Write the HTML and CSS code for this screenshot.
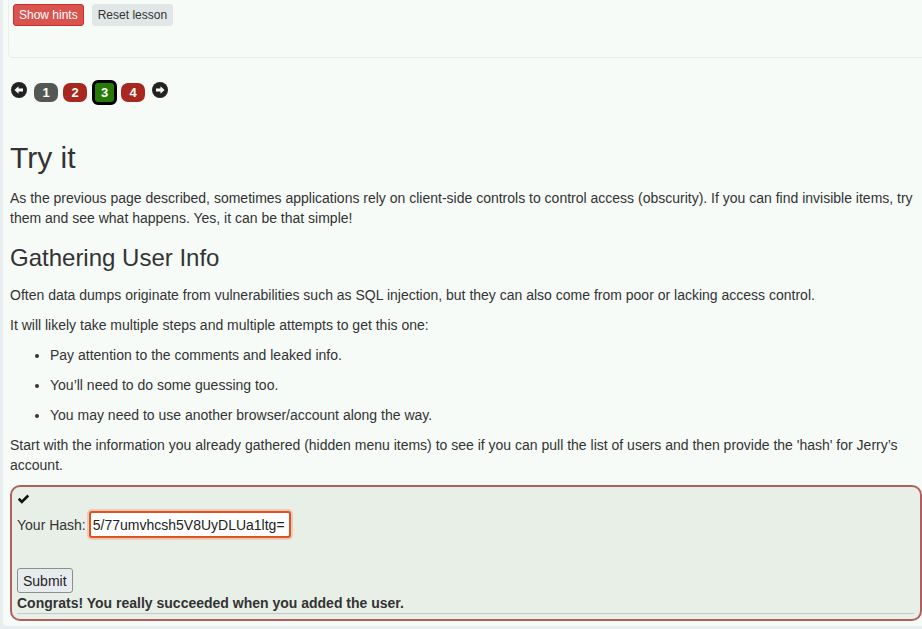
FILE: index.html
```html
<!DOCTYPE html>
<html>
<head>
<meta charset="utf-8">
<link rel="stylesheet" href="styles.css">
</head>
<body>
<div class="page">
  <div class="toolbar">
    <button class="btn btn-hints">Show hints</button>
    <button class="btn btn-reset">Reset lesson</button>
  </div>

  <div class="pager">
    <svg class="arrow" viewBox="0 0 16 16" width="16" height="16"><circle cx="8" cy="8" r="8" fill="#222"/><path d="M3.5 8 L7.5 4.2 L7.5 6.6 L12 6.6 L12 9.4 L7.5 9.4 L7.5 11.8 Z" fill="#fff"/></svg>
    <span class="pg pg-grey">1</span>
    <span class="pg pg-red">2</span>
    <span class="pg pg-green">3</span>
    <span class="pg pg-red">4</span>
    <svg class="arrow" viewBox="0 0 16 16" width="16" height="16"><circle cx="8" cy="8" r="8" fill="#222"/><path d="M12.5 8 L8.5 4.2 L8.5 6.6 L4 6.6 L4 9.4 L8.5 9.4 L8.5 11.8 Z" fill="#fff"/></svg>
  </div>

  <div class="content">
    <h1>Try it</h1>
    <p>As the previous page described, sometimes applications rely on client-side controls to control access (obscurity). If you can find invisible items, try them and see what happens. Yes, it can be that simple!</p>
    <h3>Gathering User Info</h3>
    <p>Often data dumps originate from vulnerabilities such as SQL injection, but they can also come from poor or lacking access control.</p>
    <p>It will likely take multiple steps and multiple attempts to get this one:</p>
    <ul>
      <li><p>Pay attention to the comments and leaked info.</p></li>
      <li><p>You’ll need to do some guessing too.</p></li>
      <li><p>You may need to use another browser/account along the way.</p></li>
    </ul>
    <p>Start with the information you already gathered (hidden menu items) to see if you can pull the list of users and then provide the 'hash' for Jerry’s account.</p>
  </div>

  <div class="attack">
    <div class="check"><svg viewBox="0 0 14 12" width="13" height="11"><path d="M0.8 6.2 L2.8 4.2 L5.2 6.6 L11.2 0.6 L13.2 2.6 L5.2 10.6 Z" fill="#111"/></svg></div>
    <div class="row">
      <label class="lbl">Your Hash:</label>
      <input class="hash" type="text" value="5/77umvhcsh5V8UyDLUa1ltg=">
    </div>
    <div class="spacer"></div>
    <button class="submit">Submit</button>
    <div class="congrats">Congrats! You really succeeded when you added the user.</div>
    <div class="rule"></div>
  </div>
</div>
</body>
</html>
```

FILE: styles.css
```css
html, body {
  margin: 0;
  padding: 0;
  background: #e8eef0;
}
body {
  font-family: "Liberation Sans", Arial, sans-serif;
  font-size: 14px;
  line-height: 20px;
  color: #333;
  overflow: hidden;
}
.page {
  margin-left: 3px;
  background: #f6fbf8;
  height: 626px;
  border-bottom-left-radius: 4px;
  overflow: hidden;
}
.toolbar {
  margin-left: 5px;
  border-left: 1px solid #ecf0ed;
  border-bottom: 1px solid #e6ebe8;
  border-radius: 0 0 0 5px;
  padding: 4px 4px 31px 4px;
  display: flex;
  gap: 8px;
}
.btn {
  font-family: "Liberation Sans", Arial, sans-serif;
  font-size: 12px;
  height: 22px;
  line-height: 18px;
  padding: 1px 5px;
  border-radius: 3px;
  border: 1px solid transparent;
  cursor: pointer;
}
.btn-hints {
  background: #d9534f;
  border-color: #c9302c;
  color: #fff;
}
.btn-reset {
  background: #e1e6e6;
  color: #333;
  border-color: #e1e6e6;
}
.pager {
  display: flex;
  align-items: flex-start;
  margin: 23px 0 0 8px;
  height: 25px;
}
.arrow {
  margin-top: 1px;
  display: block;
}
.pager .arrow:first-child { margin-right: 7px; }
.pager .arrow:last-child { margin-left: 7px; }
.pg {
  display: inline-block;
  width: 24px;
  height: 19px;
  margin-top: 2px;
  margin-right: 5px;
  border-radius: 7px;
  color: #fff;
  font-weight: bold;
  font-size: 13px;
  line-height: 19px;
  text-align: center;
}
.pg-grey { background: #545854; }
.pg-red { background: #a8271f; }
.pg-green {
  background: #277a08;
  border: 3px solid #000;
  width: 19px;
  height: 19px;
  margin-top: -1px;
  margin-right: 4px;
  border-radius: 6px;
}
.pg:nth-of-type(4) { margin-right: 0; }
.content {
  padding: 0 0 0 7px;
  width: 906px;
}
h1 {
  font-size: 30px;
  font-weight: normal;
  line-height: 33px;
  margin: 35px 0 14px 0;
  color: #333;
}
h3 {
  font-size: 24px;
  font-weight: normal;
  line-height: 26px;
  margin: 17px 0 14px 0;
  color: #333;
}
p {
  margin: 0 0 10px 0;
}
ul {
  margin: 0 0 10px 0;
  padding-left: 40px;
}
.attack {
  margin: 4px 0 0 7px;
  border: 2px solid #b0605c;
  border-radius: 10px;
  background: #e8efe7;
  padding: 4px 4px 5px 5px;
}
.check {
  height: 15px;
}
.check svg { display: block; margin-top: 3px; }
.row {
  display: flex;
  align-items: center;
  gap: 3px;
  height: 31px;
}
.lbl {
  color: #333;
}
.hash {
  font-family: "Liberation Sans", Arial, sans-serif;
  font-size: 14px;
  color: #222;
  width: 195px;
  height: 23px;
  box-sizing: content-box;
  padding: 0 1px 0 2px;
  border: 2px solid #e0521f;
  border-radius: 3px;
  box-shadow: 0 0 0 2px rgba(240, 160, 130, 0.45);
  background: #fff;
  outline: none;
}
.spacer { height: 28px; }
.submit {
  font-family: "Liberation Sans", Arial, sans-serif;
  font-size: 14px;
  color: #222;
  height: 25px;
  padding: 0 5px;
  background: #e9ecee;
  border: 1px solid #8a8f92;
  border-radius: 3px;
  display: block;
}
.congrats {
  font-weight: bold;
  color: #333;
  line-height: 20px;
}
.rule {
  height: 1px;
  background: #c7c7c7;
  margin-right: 2px;
}
```
